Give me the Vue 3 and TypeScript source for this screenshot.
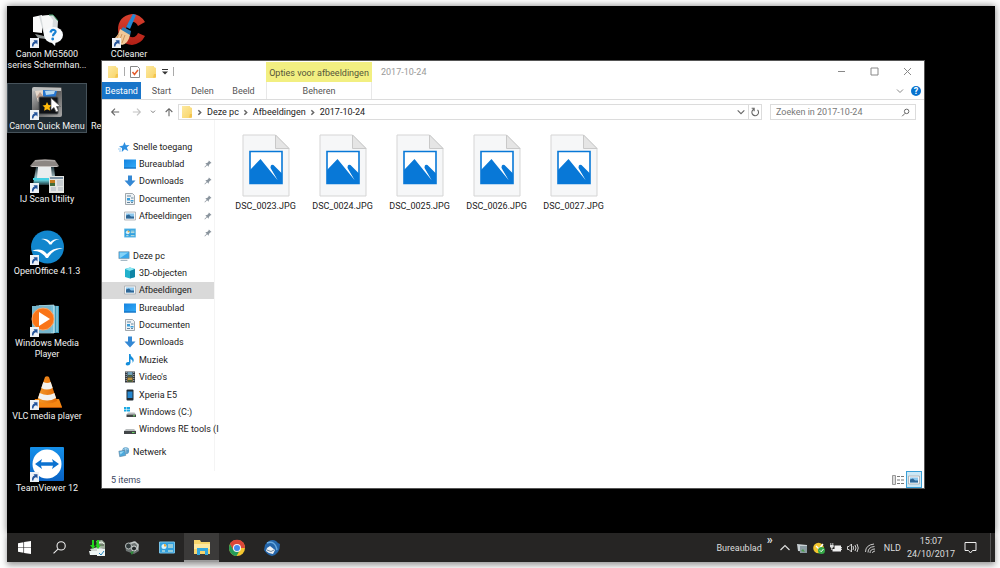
<script setup lang="ts">
interface Item { icon: string; label: string }
interface NavItem extends Item { pinned?: boolean; active?: boolean; root?: boolean }

const shortcuts: (Item & { selected?: boolean })[] = [
  { icon: 'canon', label: 'Canon MG5600 series Schermhan...' },
  { icon: 'quickmenu', label: 'Canon Quick Menu', selected: true },
  { icon: 'scan', label: 'IJ Scan Utility' },
  { icon: 'office', label: 'OpenOffice 4.1.3' },
  { icon: 'wmp', label: 'Windows Media Player' },
  { icon: 'vlc', label: 'VLC media player' },
  { icon: 'teamviewer', label: 'TeamViewer 12' },
]

const navGroups: NavItem[][] = [
  [
    { icon: 'star', label: 'Snelle toegang', root: true },
    { icon: 'screen', label: 'Bureaublad', pinned: true },
    { icon: 'download', label: 'Downloads', pinned: true },
    { icon: 'document', label: 'Documenten', pinned: true },
    { icon: 'picture', label: 'Afbeeldingen', pinned: true },
    { icon: 'panel', label: '', pinned: true },
  ],
  [
    { icon: 'pc', label: 'Deze pc', root: true },
    { icon: 'cube', label: '3D-objecten' },
    { icon: 'picture', label: 'Afbeeldingen', active: true },
    { icon: 'screen', label: 'Bureaublad' },
    { icon: 'document', label: 'Documenten' },
    { icon: 'download', label: 'Downloads' },
    { icon: 'music', label: 'Muziek' },
    { icon: 'video', label: "Video's" },
    { icon: 'phone', label: 'Xperia E5' },
    { icon: 'windisk', label: 'Windows (C:)' },
    { icon: 'disk', label: 'Windows RE tools (I' },
  ],
  [{ icon: 'network', label: 'Netwerk', root: true }],
]

const files = ['DSC_0023.JPG', 'DSC_0024.JPG', 'DSC_0025.JPG', 'DSC_0026.JPG', 'DSC_0027.JPG']
const crumbs = ['Deze pc', 'Afbeeldingen', '2017-10-24']

const taskItems = [
  { icon: 'scanner', label: 'Scanner' },
  { icon: 'binocular', label: 'Camera' },
  { icon: 'panel', label: 'Configuratie' },
  { icon: 'explorer', label: 'Verkenner', active: true },
  { icon: 'chrome', label: 'Chrome' },
  { icon: 'bird', label: 'Thunderbird' },
]
const trayItems = ['t-up', 't-drive', 't-check', 't-battery', 't-sound', 't-wifi']
</script>

<template>
  <div class="frame">
    <svg class="sprites" aria-hidden="true">
      <defs>
        <linearGradient id="gFolder" x1="0" y1="0" x2="1" y2="1"><stop offset="0" stop-color="#fde9a0" /><stop offset="1" stop-color="#f8d467" /></linearGradient>
        <linearGradient id="gGrey" x1="0" y1="0" x2="1" y2="1"><stop offset="0" stop-color="#c9c9c9" /><stop offset=".5" stop-color="#5a5a5a" /><stop offset="1" stop-color="#a9a9a9" /></linearGradient>
        <linearGradient id="gTv" x1="0" y1="0" x2="0" y2="1"><stop offset="0" stop-color="#1590ea" /><stop offset="1" stop-color="#0862c4" /></linearGradient>
        <linearGradient id="gSky" x1="0" y1="0" x2="1" y2="1"><stop offset="0" stop-color="#1583df" /><stop offset="1" stop-color="#35aefa" /></linearGradient>
        <linearGradient id="gRed" x1="0" y1="0" x2="0" y2="1"><stop offset="0" stop-color="#d9412f" /><stop offset="1" stop-color="#b21f16" /></linearGradient>
        <linearGradient id="gScan" x1="0" y1="0" x2="0" y2="1"><stop offset="0" stop-color="#253b42" /><stop offset=".45" stop-color="#8aa0a6" /><stop offset=".7" stop-color="#6fe0ee" /><stop offset="1" stop-color="#20343a" /></linearGradient>
        <linearGradient id="gCone" x1="0" y1="0" x2="1" y2="0"><stop offset="0" stop-color="#f59a2a" /><stop offset="1" stop-color="#e36a05" /></linearGradient>
      </defs>
      <symbol id="arrowbox" viewBox="0 0 9 10"><path d="M0 0h9v10H0z" fill="#edf1f6" /><path d="M2 8.5C1.8 5.6 2.8 4 4.6 3.5L3.5 2.2h4v4.2L6.2 5.2C4.5 5.4 3.5 6.5 3.4 8.5z" fill="#24549b" /></symbol>
      <symbol id="canon" viewBox="0 0 36 36"><path d="M4 5 13 3v18L4 20z" fill="#fafafa" /><path d="m10 4 14-1 5 6-1 15-12 3z" fill="#d7dcdd" /><path d="m12 4 8-1 4 5-1 13-7 4z" fill="#f6f7f7" /><path d="m20 3 4 0 5 6" fill="none" stroke="#53a877" /><path d="m6 22 9 2 2 3-8-1z" fill="#8f9696" /><ellipse cx="24.500" cy="23" rx="9.500" ry="8" fill="#f8fbfd" /><path d="m21 29 5 5 1-6z" fill="#f8fbfd" /><path d="M21.500 20.500q.5-3 3.500-2.500 3 1 .5 3.500-1.500 1-1.500 2.800" fill="none" stroke="#1680d2" stroke-width="2.200" /><circle cx="23.700" cy="27" r="1.400" fill="#1680d2" /></symbol>
      <symbol id="quickmenu" viewBox="0 0 36 36"><rect x="3" y="3" width="30" height="30" rx="2" fill="url(#gGrey)" /><rect x="4" y="4" width="28" height="3" fill="#bfc0bf" /><path d="m6 7 10-1 1 9-8 3z" fill="#e4d6c9" /><path d="m14 6 14 1-2 8-12-1z" fill="#2474cf" /><path d="m16 7 10 0-1 3-8 1z" fill="#b6d7ee" /><path d="M7 14l4-6 4 5z" fill="#b99c8d" /><rect x="10" y="13" width="19" height="17" rx="1" fill="#101216" stroke="#4d5052" /><path d="m18 18 1.500 3 3 .3-2 2.200.8 3.200-3.200-1.500-3 1.500.6-3.200-2.200-2 3.200-.4z" fill="#ffb90b" /><path d="M22 14v12l3-2.500 2 4.500 2.500-1-2-4.500h4z" fill="#fff" stroke="#555" stroke-width=".7" /></symbol>
      <symbol id="scan" viewBox="0 0 36 36"><path d="M6 3q10-1.500 20 0l4 6H1z" fill="#8c8683" /><path d="M6 4q10-1.500 20 0" fill="none" stroke="#b8b3b1" /><path d="M1 9h29l-2 1H3z" fill="#c6c1bf" /><path d="M7 10h18l2 18H4z" fill="url(#gScan)" /><path d="M9 10h13l1 11H8z" fill="#e9edef" /><path d="M4 21h22v2H4z" fill="#45cfe3" /><rect x="20" y="19" width="15" height="17" fill="#e4e5e2" /><path d="M21 21h13" stroke="#58738c" stroke-width="1.500" /><path d="M28 24h6m-6 2h6m-6 2h6M22 31h5m-5 2h5m2-2h5m-5 2h5" stroke="#a9b4be" /><path d="M21 23h5v6h-5z" fill="#c57c1e" /><path d="M21 26h5v3h-5z" fill="#426d38" /></symbol>
      <symbol id="office" viewBox="0 0 36 36"><circle cx="18.500" cy="18" r="16.500" fill="#1186cd" /><path d="M12 10q6-1 9.500 3 3-3.500 9-3-6 1-8 5.500h-2q-3-5-8.500-5.500zM3 22q9-4 15 3 6-7 16-6-11 2-15 10h-2Q12 21 3 22z" fill="#fff" /></symbol>
      <symbol id="wmp" viewBox="0 0 36 36"><path d="m10 4 20 1v27H10z" fill="#3c98b8" /><path d="m7 5 18-1v28H7z" fill="#78bfd8" stroke="#c3e7ef" stroke-width=".7" /><path d="M3 5h19v27H3z" fill="#77b7ce" /><path d="M25 5v27M28 5v26" stroke="#bce2eb" /><circle cx="14" cy="18" r="11" fill="#fa7518" stroke="#f9a76a" /><path d="m10 11 11 7-11 7z" fill="#fff" /></symbol>
      <symbol id="vlc" viewBox="0 0 36 36"><path d="M6 25h24l3 8H3z" fill="#f58613" /><path d="M3 33h30v1H3z" fill="#b85104" /><path d="m16 3q2-1.500 4 0l8 24q-9 5-20 0z" fill="url(#gCone)" /><path d="m14.300 8q4 2 7.400 0l2 6q-6 3-11.400 0zM10.700 19q8 4 14.700 0l1.700 5q-9 5-18 0z" fill="#f2f2ef" /></symbol>
      <symbol id="teamviewer" viewBox="0 0 36 36"><rect x="1" y="1" width="34" height="34" rx="1" fill="url(#gTv)" /><circle cx="18" cy="18" r="14.500" fill="#fff" /><path d="m6 18 7-5-1 3.300h12L23 13l7 5-7 5 1-3.300H12l1 3.300z" fill="#0b72d0" /></symbol>
      <symbol id="ccleaner" viewBox="0 0 36 36"><path d="M34 10Q29 2 21 2 7 4 7 18q1 14 14 15 9-1 13-9l-7-3q-2 5-7 4-6-2-5-8 1-7 7-7 3 0 5 4z" fill="url(#gRed)" /><path d="m22 2 3 1-6 14-4-2z" fill="#2389d6" /><path d="m12 15 8 4-1 5-10-5z" fill="#2b7bb4" /><path d="m9 17 10 6q-2 9-8 10-5-3-10-5 6-3 8-11z" fill="#f1c998" /><path d="m8 22-3 6m6-6-3 8m6-7-3 8" stroke="#cf965b" /></symbol>

      <symbol id="folder" viewBox="0 0 12 14"><path d="M1 1h8v1l2 1v9l-1 1H1z" fill="url(#gFolder)" /><path d="M9 9h2v3.500H8z" fill="#f3c44e" /></symbol>
      <symbol id="star" viewBox="0 0 12 12"><path d="m6.500 1 1.300 3.200 3.700-.2-2.700 2.500 1.500 3.500L6.700 8.300 3.800 11l.2-4L1 5.500l4-.9z" fill="#2d8fe0" /><path d="M0 8h3M1 10h2" stroke="#7fbef0" stroke-width=".8" /></symbol>
      <symbol id="screen" viewBox="0 0 12 12"><path d="M0 1.500h12v9H0z" fill="url(#gSky)" /><path d="M0 10h12" stroke="#0c62b3" /></symbol>
      <symbol id="download" viewBox="0 0 12 12"><path d="M4 .5h4v5h3.500L6 11.500.5 5.500H4z" fill="#3488d4" /></symbol>
      <symbol id="document" viewBox="0 0 12 12"><path d="M1.500.5h7l2 2v9h-9z" fill="#eef2f5" stroke="#8b9399" stroke-width=".8" /><path d="M3 3h4M3 9.500h3M7 5h2.500M7 9.500h2" stroke="#66869d" /><path d="M3 5h3v2.500H3zM6.500 7h3v1.500h-3z" fill="#389edb" /></symbol>
      <symbol id="picture" viewBox="0 0 12 12"><path d="M.5 2h11v8H.5z" fill="#f3f5f7" stroke="#a6abaf" stroke-width=".8" /><path d="M2 3.500h8v5H2z" fill="#8bc7ee" /><path d="m2 8.500 0-3 3-1 2 2 3 0v2z" fill="#2f6796" /></symbol>
      <symbol id="panel" viewBox="0 0 16 13"><path d="M.5 1h15v11H.5z" fill="#32a0df" stroke="#76c3e9" /><circle cx="5" cy="5.500" r="2.500" fill="#d8f2fb" /><path d="M5 5.500V3a2.500 2.500 0 0 1 2.500 2.500z" fill="#f3ab34" /><path d="M9 4h5M9 6h5M3 10h3m3 0h5" stroke="#f4f7d9" /></symbol>
      <symbol id="pc" viewBox="0 0 14 12"><path d="M1 1h12v8H1z" fill="#39a7ea" stroke="#77909f" stroke-width=".7" /><path d="M2 2h10L3 8H2z" fill="#83d3f8" /><path d="M3 10.500h8v1H3z" fill="#849eae" /></symbol>
      <symbol id="cube" viewBox="0 0 12 12"><path d="m1 2 5-1.500L11 2v8l-5 1.500L1 10z" fill="#22b1cc" /><path d="m1 2 5-1.500L11 2 6 4z" fill="#8de8f3" /><path d="M6 4v7.500l5-1.500V2z" fill="#1085a5" /></symbol>
      <symbol id="music" viewBox="0 0 12 12"><path d="M5 0h1.500q0 2 2 3.500Q11 6 8.500 9q.7-3-2-4v4Q6 11.500 3.500 11.500 1 11 2 9q1-1.500 3-1z" fill="#168edb" /></symbol>
      <symbol id="video" viewBox="0 0 12 12"><path d="M1 .5h10v11H1z" fill="#323940" /><path d="M3.500 1h5v4.500h-5z" fill="#72a0ba" /><path d="M3.500 6.500h5V11h-5z" fill="#bd923f" /><path d="M4 4h4v1.500H4zM4 9h4v2H4z" fill="#485e39" /><path d="M2.200 1v10M9.800 1v10" stroke="#bcc1c4" stroke-dasharray="1 1" /></symbol>
      <symbol id="phone" viewBox="0 0 12 12"><rect x="2.500" y=".5" width="7" height="11" rx="1" fill="#202a33" /><path d="M3.500 2.500h5v6.500h-5z" fill="#2687cf" /></symbol>
      <symbol id="disk" viewBox="0 0 12 12"><path d="m2 6h8l2 2H0z" fill="#b8bcbd" /><path d="M0 8h12v3H0z" fill="#424648" /><path d="M8 9.500h2.500" stroke="#69d763" /></symbol>
      <symbol id="windisk" viewBox="0 0 12 12"><path d="M0 1h2.500v2H0zM3 1h3v2H3zM0 3.500h2.500v2H0zM3 3.500h3v2H3z" fill="#1baae4" /><path d="m4 6.500h6.500l1.500 2H2.500z" fill="#b8bcbd" /><path d="M2.500 8.500H12V11H2.500z" fill="#424648" /><path d="M9 9.800h2" stroke="#69d763" /></symbol>
      <symbol id="network" viewBox="0 0 14 12"><circle cx="9" cy="4.500" r="4" fill="#5c9dc7" /><path d="M6 3q3-2 6 0M9 1v7" stroke="#bae2f4" fill="none" /><path d="m1 5 7-1 1 6-7 1.500z" fill="#4ca9dd" stroke="#6285a0" stroke-width=".7" /><path d="m2 6 5-1-4 4z" fill="#9bdbf7" /></symbol>
      <symbol id="pin" viewBox="0 0 9 9"><path d="M5.500.5 8.500 3.500 7 4 5.500 5.500 5.300 7.500 3.500 6 1 8.500.5 8 3 5.300 1.500 3.700l2-.2L5 2z" fill="#8a949d" /></symbol>
      <symbol id="jpg" viewBox="0 0 48 63"><path d="M1 1h32.500L47 14.500V62H1z" fill="#f6f7f8" stroke="#d5d5d5" /><path d="M33.500 1v13.500H47z" fill="#e5e5e5" stroke="#c9c9c9" /><path d="M8 17.500h32v32H8z" fill="#fff" stroke="#0878d7" stroke-width="1.600" /><path d="M8 36 18.500 25 35.500 46 28.500 34Q28.500 29.500 31.500 31L40 39.500v10H8z" fill="#0878d7" /><path d="m28 34 8 12.500-7-10.500-2-1z" fill="#fff" /></symbol>

      <symbol id="scanner" viewBox="0 0 18 18"><path d="m8 2 6-1 3 3v6l-6-1z" fill="#9fb09d" /><path d="m10 4 4-1 2 2" stroke="#e4ece2" fill="none" /><path d="M9 6h7" stroke="#44503f" /><path d="m2 10 8-2 7 2-2 3H4z" fill="#cfd5d1" /><path d="M1 12h9v4H2zM9 10h8v7H9z" fill="#eef5f4" /><path d="m11 14 2 2 3-4" stroke="#2386c2" fill="none" /><path d="m4 1 2 0 0 6 2-1-3 4-3-4h2zM9 1h2v6l2-1-3 4-2-3z" fill="#24d61c" /></symbol>
      <symbol id="binocular" viewBox="0 0 18 18"><path d="m2 6 9-4 5 3v7l-5 3-8-3z" fill="#6d7473" /><path d="m5 5 7-2 3 3-1 5" stroke="#c3c8c7" fill="none" stroke-width="1.400" /><circle cx="5.500" cy="7" r="3" fill="#30393a" stroke="#b7bdbc" /><circle cx="11" cy="9.500" r="2.500" fill="#23292a" stroke="#d5dad9" /><path d="m7 13 4-1-2 4z" fill="#2f8a3a" /></symbol>
      <symbol id="explorer" viewBox="0 0 18 18"><path d="M1 2h6l1 2h9v12H1z" fill="#f7d66d" /><path d="M1 6h16v5H1z" fill="#fee99f" /><path d="M4 10h11v7h-3v-4H7v4H4z" fill="#34a9df" /></symbol>
      <symbol id="chrome" viewBox="0 0 18 18"><circle cx="9" cy="9" r="8" fill="#f4c62f" /><path d="M9 9H17A8 8 0 0 0 2.100 5l3.400 6z" fill="#db4639" /><path d="m9 9-3.500 2L2.100 5A8 8 0 0 0 8.500 17l3.500-6z" fill="#259c59" /><path d="M9 5h7a8 8 0 0 0-14-.2L5.500 11z" fill="#db4639" /><circle cx="9" cy="9" r="4" fill="#f5f5f5" /><circle cx="9" cy="9" r="3" fill="#4489ed" /></symbol>
      <symbol id="bird" viewBox="0 0 18 18"><path d="M2 6q5-7 11-4l2 2 2 1q0 10-8 12-5-1-8-6z" fill="#2465a9" /><path d="m4 9 3-2 5 4-2 4q-4 0-7-3z" fill="#eff1f3" /><path d="m4 11 4 1.500 3-1.500" fill="none" stroke="#69859e" /><path d="M4 4q8-3 10 7" stroke="#67a9df" fill="none" stroke-width="1.500" /></symbol>
      <symbol id="t-up" viewBox="0 0 12 12"><path d="m1.500 8 4.500-4.500L10.500 8" fill="none" stroke="#ddd" stroke-width="1.200" /></symbol>
      <symbol id="t-drive" viewBox="0 0 12 12"><path d="m1 2 10 1v7L2 9z" fill="#c8d0d4" /><path d="M4 4h7v7H4z" fill="#8a9aa1" /><path d="m5 9 2-2 2 3z" fill="#4b9d4b" /></symbol>
      <symbol id="t-check" viewBox="0 0 12 12"><circle cx="5.500" cy="6" r="5.300" fill="#f2c52e" /><path d="m3 4 3 3 4-5" fill="none" stroke="#fff" stroke-width="1.400" /><circle cx="8.500" cy="8.500" r="3.500" fill="#35a847" /><path d="m7 8.500 1.200 1.200L10.500 7" fill="none" stroke="#fff" /></symbol>
      <symbol id="t-battery" viewBox="0 0 12 12"><path d="M4.500 3.500h6.500v6H2.500V7h2z" fill="#f0f0f0" /><path d="M11 5.500h1v2h-1M.8 1v2m2-2v2" stroke="#eee" stroke-width=".8" /><path d="M0 3h3.700v2L2.300 6v2h-1V6L0 5z" fill="#ddd" /></symbol>
      <symbol id="t-sound" viewBox="0 0 12 12"><path d="M.5 4.500H2L4.500 2v8L2 7.500H.5zM6 4q1 2 0 4M8 3q2 3 0 6M10 2q2.500 4 0 8" fill="none" stroke="#e4e4e4" stroke-width=".9" /></symbol>
      <symbol id="t-wifi" viewBox="0 0 12 12"><path d="M1.500 10Q1.500 3 10 2M4 10.500Q4 5 10.500 4.500M6 11q0-4 5-4M8.500 11q0-2 2.500-2" fill="none" stroke="#ccc" /></symbol>
    </svg>

    <main class="desktop">
      <div class="shortcuts">
        <button v-for="s in shortcuts" :key="s.label" class="shortcut" :class="{ selected: s.selected }">
          <span class="picture">
            <svg class="big"><use :href="'#' + s.icon" /></svg>
            <svg class="badge"><use href="#arrowbox" /></svg>
          </span>
          <span class="caption">{{ s.label }}</span>
        </button>
        <button class="shortcut second">
          <span class="picture">
            <svg class="big"><use href="#ccleaner" /></svg>
            <svg class="badge"><use href="#arrowbox" /></svg>
          </span>
          <span class="caption">CCleaner</span>
        </button>
        <button class="shortcut second covered"><span class="caption">Re</span></button>
      </div>

      <section class="window">
        <header class="titlebar">
          <div class="quick">
            <svg class="folder"><use href="#folder" /></svg>
            <i class="divider"></i>
            <svg class="sheet" viewBox="0 0 10 12"><path d="M.5.500h7l2 2v9h-9z" fill="#fff" stroke="#888" /><path d="m2.500 6 2 2.500L8 4" fill="none" stroke="#e45b2c" stroke-width="1.500" /></svg>
            <svg class="folder"><use href="#folder" /></svg>
            <svg class="more" viewBox="0 0 6 6"><path d="M0 .500h6" stroke="#333" /><path d="M0 2.500h6L3 5.500z" fill="#333" /></svg>
            <i class="divider"></i>
          </div>
          <div class="context">Opties voor afbeeldingen</div>
          <div class="title">2017-10-24</div>
          <div class="controls">
            <button aria-label="Minimaliseren"><svg viewBox="0 0 9 9"><path d="M1 4.500h7" /></svg></button>
            <button aria-label="Maximaliseren"><svg viewBox="0 0 9 9"><path d="M1 1h7v7H1z" /></svg></button>
            <button aria-label="Sluiten"><svg viewBox="0 0 9 9"><path d="m1 1 7 7M8 1 1 8" /></svg></button>
          </div>
        </header>

        <nav class="ribbon">
          <button class="file">Bestand</button>
          <button class="tab">Start</button>
          <button class="tab">Delen</button>
          <button class="tab">Beeld</button>
          <button class="tab manage">Beheren</button>
          <span class="grow"></span>
          <button class="expand" aria-label="Lint uitvouwen"><svg viewBox="0 0 8 8"><path d="m1 2.500 3 3 3-3" /></svg></button>
          <button class="help" aria-label="Help">?</button>
        </nav>

        <div class="address">
          <button aria-label="Vorige"><svg viewBox="0 0 12 12"><path d="M11 6H2M6 2 2 6l4 4" /></svg></button>
          <button class="off" aria-label="Volgende"><svg viewBox="0 0 12 12"><path d="M1 6h9M6 2l4 4-4 4" /></svg></button>
          <button class="tiny" aria-label="Recente locaties"><svg viewBox="0 0 12 12"><path d="m3 4 3 3 3-3" /></svg></button>
          <button aria-label="Omhoog"><svg viewBox="0 0 12 12"><path d="M6 11V2M2 6l4-4 4 4" /></svg></button>
          <div class="path">
            <svg class="folder"><use href="#folder" /></svg>
            <template v-for="c in crumbs" :key="c">
              <svg class="chev" viewBox="0 0 6 6"><path d="m2 1 2 2-2 2" /></svg>
              <a href="#">{{ c }}</a>
            </template>
            <span class="grow"></span>
            <button class="drop" aria-label="Eerdere locaties"><svg viewBox="0 0 12 12"><path d="m2 4 4 4 4-4" /></svg></button>
            <button class="refresh" aria-label="Vernieuwen"><svg viewBox="0 0 12 12"><path d="M9 3.500A4 4 0 1 1 4.500 2.800M2 1.500h3v3.500" /></svg></button>
          </div>
          <label class="search">
            <input type="text" aria-label="Zoeken" placeholder="Zoeken in 2017-10-24" />
            <svg viewBox="0 0 12 12"><circle cx="7.500" cy="4.500" r="3" /><path d="M5.500 7 1.500 11" /></svg>
          </label>
        </div>

        <div class="body">
          <nav class="tree">
            <div v-for="(group, g) in navGroups" :key="g" class="group" :class="'group' + g">
              <a v-for="(n, i) in group" :key="i" href="#" :class="{ root: n.root, active: n.active }">
                <svg class="small"><use :href="'#' + n.icon" /></svg>
                <span>{{ n.label }}</span>
                <svg v-if="n.pinned" class="pin"><use href="#pin" /></svg>
              </a>
            </div>
          </nav>
          <div class="files">
            <button v-for="f in files" :key="f" class="file-item">
              <svg class="thumb"><use href="#jpg" /></svg>
              <span>{{ f }}</span>
            </button>
          </div>
        </div>

        <footer class="status">
          <span>5 items</span>
          <span class="grow"></span>
          <button class="list" aria-label="Details"><svg viewBox="0 0 12 10"><path d="M.5.500h3v9h-3z" fill="#ddd" stroke="#999" /><path d="M5 1.500h3m1 0h3M5 5h3m1 0h3M5 8.500h3m1 0h3" stroke="#777" /></svg></button>
          <button class="view" aria-label="Grote pictogrammen"><svg><use href="#picture" /></svg></button>
        </footer>
      </section>
    </main>

    <footer class="taskbar">
      <button class="task" aria-label="Start"><svg class="glyph" viewBox="0 0 12 12"><path d="M0 2 5 1.200v4.500H0zM5.600 1 12 0v5.700H5.600zM0 6.300h5v4.500L0 10zM5.600 6.300H12V12l-6.400-1z" fill="#fff" /></svg></button>
      <button class="task" aria-label="Zoeken"><svg class="glyph" viewBox="0 0 12 12"><circle cx="7.500" cy="4.500" r="3.800" fill="none" stroke="#eee" /><path d="M4.800 7.200.5 11.500" stroke="#eee" /></svg></button>
      <div class="apps">
        <button v-for="t in taskItems" :key="t.icon" class="task" :class="{ running: t.active, wide: t.icon === 'panel' }" :aria-label="t.label"><svg><use :href="'#' + t.icon" /></svg></button>
      </div>
      <span class="grow"></span>
      <span class="toolbar">Bureaublad</span>
      <span class="overflow">»</span>
      <div class="tray">
        <svg v-for="t in trayItems" :key="t"><use :href="'#' + t" /></svg>
      </div>
      <span class="lang">NLD</span>
      <div class="clock"><span>15:07</span><span>24/10/2017</span></div>
      <button class="notify" aria-label="Meldingen"><svg viewBox="0 0 13 13"><path d="M1 1.500h11v8H8.500L6.500 12l-2-2.500H1z" fill="none" stroke="#eee" /></svg></button>
      <i class="peek"></i>
    </footer>
  </div>
</template>

<style>
body { background: #fdfdfd; overflow: hidden; }
</style>

<style scoped>
* { box-sizing: border-box; }
.frame {
  margin: 0 5px 0 7px;
  padding: 6px 0;
  height: 100vh;
  display: flex;
  flex-direction: column;
  font: 9px/12px Roboto, "Open Sans", sans-serif;
  color: #222;
}
button { font: inherit; color: inherit; border: 0; padding: 0; margin: 0; background: none; }
a { color: inherit; text-decoration: none; }
svg { display: block; flex: none; }
.sprites { position: absolute; width: 0; height: 0; }
.grow { flex: 1; }
.desktop {
  position: relative;
  flex: 1;
  background: #000;
  box-shadow: 0 0 7px rgba(0, 0, 0, .5);
}
.shortcuts {
  height: 97%;
  padding-top: 5px;
  display: grid;
  grid-template: repeat(7, 1fr) / 80px 82px;
  grid-auto-flow: column;
  column-gap: 1px;
}
.shortcut {
  align-self: start;
  display: flex;
  flex-direction: column;
  align-items: center;
  min-height: 50px;
  border: 1px solid transparent;
  color: #f2f2f2;
}
.shortcut.selected { background: #1f2a31; border-color: #46525a; }
.second { grid-column: 2; }
.covered { grid-row: 2; align-items: flex-start; padding: 36px 3px 0; }
.picture { position: relative; }
.big { width: 36px; height: 36px; }
.badge { position: absolute; left: 1px; bottom: 0; width: 9px; height: 10px; }
.caption { text-align: center; line-height: 11px; padding-top: 1px; margin: 0 -1px; }

.window {
  position: absolute;
  inset: 54px 70px 44px 94px;
  display: flex;
  flex-direction: column;
  background: #fff;
  border: 1px solid #555;
  overflow: hidden;
}
.titlebar { display: flex; height: 21px; align-items: center; }
.quick { width: 164px; display: flex; align-items: center; gap: 5px; padding-left: 5px; }
.folder { width: 12px; height: 14px; }
.divider { width: 1px; height: 9px; background: #aaa; }
.sheet { width: 10px; height: 12px; }
.more { width: 6px; height: 6px; }
.context { align-self: stretch; width: 106px; line-height: 22px; margin-top: 1px; text-align: center; background: #f2ef81; white-space: nowrap; color: #55553a; }
.title { margin-left: 9px; color: #999; flex: 1; }
.controls { display: flex; }
.controls button { width: 33px; height: 20px; display: grid; place-items: center; }
.controls svg { width: 9px; height: 9px; stroke: #888; fill: none; }

.ribbon { height: 18px; display: flex; align-items: stretch; border-bottom: 1px solid #dcdcdc; color: #555; }
.file { width: 39px; background: #1975c9; color: #fff; }
.tab { width: 41px; }
.ribbon .manage { width: 106px; margin-left: 2px; border: 1px solid #e8e8e8; border-width: 0 1px; }
.expand svg { width: 8px; height: 8px; fill: none; stroke: #888; }
.help { align-self: center; width: 10px; height: 10px; margin: 0 3px 0 7px; border-radius: 50%; background: #0873cf; color: #fff; line-height: 10px; font-weight: 700; }

.address { display: flex; align-items: center; padding: 4px 8px 0 4px; }
.address button { width: 18px; height: 15px; display: grid; place-items: center; }
.address svg:not(.folder) { fill: none; stroke: #666; stroke-width: 1.3; }
.address button svg { width: 10px; height: 10px; }
.address .off svg { opacity: .4; }
.address .off { margin-left: 4px; }
.address .tiny { width: 14px; }
.address .tiny svg { width: 8px; }
.path { flex: 1; height: 16px; display: flex; align-items: center; border: 1px solid #dcdcdc; padding-left: 2px; }
.path .chev { width: 7px; height: 7px; margin: 0 4px 0 3px; }
.path .drop { width: 14px; }
.path .refresh { width: 13px; border-left: 1px solid #dcdcdc; }
.search { width: 146px; height: 16px; margin-left: 8px; display: flex; align-items: center; border: 1px solid #dcdcdc; padding: 0 5px; }
.search input { flex: 1; min-width: 0; border: 0; outline: 0; padding: 0; background: none; font: inherit; }
.search input::placeholder { color: #777; opacity: 1; }
.search svg { width: 9px; height: 9px; }

.body { flex: 1; display: flex; min-height: 0; }
.tree { width: 113px; padding-top: 18px; border-right: 1px solid #f4f4f4; }
.group { display: flex; flex-direction: column; margin-bottom: 5px; }
.group0 { min-height: 104px; }
.group1 { min-height: 191px; }
.group2 { min-height: 18px; }
.group a { flex: 1; display: flex; align-items: center; padding-left: 22px; gap: 3px; white-space: nowrap; }
.group .root { padding-left: 16px; }
.group .active { background: #d9d9d9; }
.small { width: 12px; height: 12px; }
.pin { width: 8px; height: 8px; margin: 0 2px 0 auto; }
.files { flex: 1; display: flex; flex-wrap: wrap; align-content: flex-start; padding: 14px 0 0 12px; }
.file-item { width: 77px; display: flex; flex-direction: column; align-items: center; gap: 3px; }
.thumb { width: 48px; height: 63px; }

.status { height: 17px; display: flex; align-items: center; padding: 0 2px 0 9px; color: #3a4660; }
.list svg { width: 12px; height: 10px; }
.view { width: 16px; height: 17px; margin-left: 2px; border: 1px solid #3aa0d8; background: #cce8f6; display: grid; place-items: center; }
.view svg { width: 12px; height: 12px; }

.taskbar {
  position: relative;
  height: 29px;
  display: flex;
  align-items: center;
  background: #262524;
  color: #ddd;
  box-shadow: 0 3px 6px rgba(0, 0, 0, .4);
}
.task { width: 35px; height: 29px; display: grid; place-items: center; }
.task svg { width: 18px; height: 18px; }
.task .glyph { width: 13px; height: 13px; }
.wide svg { width: 16px; height: 13px; }
.apps { display: flex; margin-left: 2px; }
.running { background: #3b3a39; border-bottom: 2px solid #9a9a9a; }
.overflow { align-self: flex-start; margin: 1px 6px 0 5px; font-size: 12px; font-weight: 700; }
.tray { display: flex; gap: 5px; }
.tray svg { width: 12px; height: 12px; }
.lang { margin-left: 8px; }
.clock { width: 60px; display: flex; flex-direction: column; gap: 1px; align-items: center; }
.notify { margin: 0 13px 0 3px; }
.notify svg { width: 13px; height: 13px; }
.peek { width: 5px; height: 29px; border-left: 1px solid #555; }
</style>
